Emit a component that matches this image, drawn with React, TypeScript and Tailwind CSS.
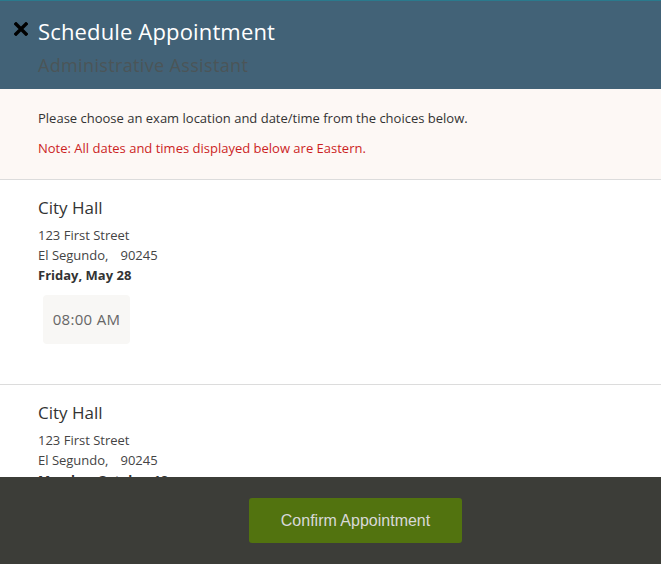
import React from "react";

const slots = [
  { date: "Friday, May 28", times: ["08:00 AM"] },
  { date: "Monday, October 18", times: ["09:00 AM"] },
];

function Card({ date, times }: { date: string; times: string[] }) {
  return (
    <div className="border-b border-[#dcdcdc] pl-[38px] pt-[16px] pb-[40px]">
      <div className="text-[17px] leading-[24px] text-[#333]">City Hall</div>
      <div className="mt-[5px] text-[13px] leading-[20px] text-[#444]">
        <div>123 First Street</div>
        <div>
          El Segundo,<span className="ml-[12px]">90245</span>
        </div>
        <div className="font-bold text-[#333]">{date}</div>
      </div>
      <div className="mt-[10px] flex gap-2 pl-[5px]">
        {times.map((t) => (
          <div
            key={t}
            className="flex h-[49px] w-[87px] items-center justify-center rounded-[4px] bg-[#f8f7f5] text-[15px] tracking-[0.3px] text-[#666]"
          >
            {t}
          </div>
        ))}
      </div>
    </div>
  );
}

export default function App() {
  return (
    <div
      className="flex h-[564px] w-full flex-col overflow-hidden bg-white"
      style={{ fontFamily: "'Open Sans', Lato, sans-serif" }}
    >
      <header className="h-[89px] shrink-0 border-t border-[#2a7a8d] bg-[#426277]">
        <div className="flex items-start pl-[14px] pt-[16px]">
          <svg width="14" height="14" viewBox="0 0 14 14" className="mt-[5px] shrink-0">
            <path d="M2 2 L12 12 M12 2 L2 12" stroke="#000" strokeWidth="3.4" strokeLinecap="square" />
          </svg>
          <div className="ml-[10px]">
            <h1 className="text-[22px] leading-[28px] tracking-[0.15px] text-white">Schedule Appointment</h1>
            <div className="mt-[8px] text-[18px] leading-[24px] tracking-[0.35px] text-[#4b5558]">
              Administrative Assistant
            </div>
          </div>
        </div>
      </header>
      <section className="shrink-0 border-b border-[#dcdcdc] bg-[#fdf8f5] pl-[38px] pt-[19px] pb-[21px] text-[13px] leading-[20px]">
        <p className="text-[#333]">Please choose an exam location and date/time from the choices below.</p>
        <p className="mt-[10px] text-[#cc1f1f]">Note: All dates and times displayed below are Eastern.</p>
      </section>
      <main className="min-h-0 flex-1 overflow-hidden">
        {slots.map((s) => (
          <Card key={s.date} date={s.date} times={s.times} />
        ))}
      </main>
      <footer className="h-[87px] shrink-0 bg-[#3c3d38] pl-[249px] pt-[21px]">
        <button
          className="h-[45px] w-[213px] rounded-[3px] bg-[#52730f] text-[16px] text-[#d9d9d9]"
          style={{ fontFamily: "'Liberation Sans', Arial, sans-serif" }}
        >
          Confirm Appointment
        </button>
      </footer>
    </div>
  );
}
